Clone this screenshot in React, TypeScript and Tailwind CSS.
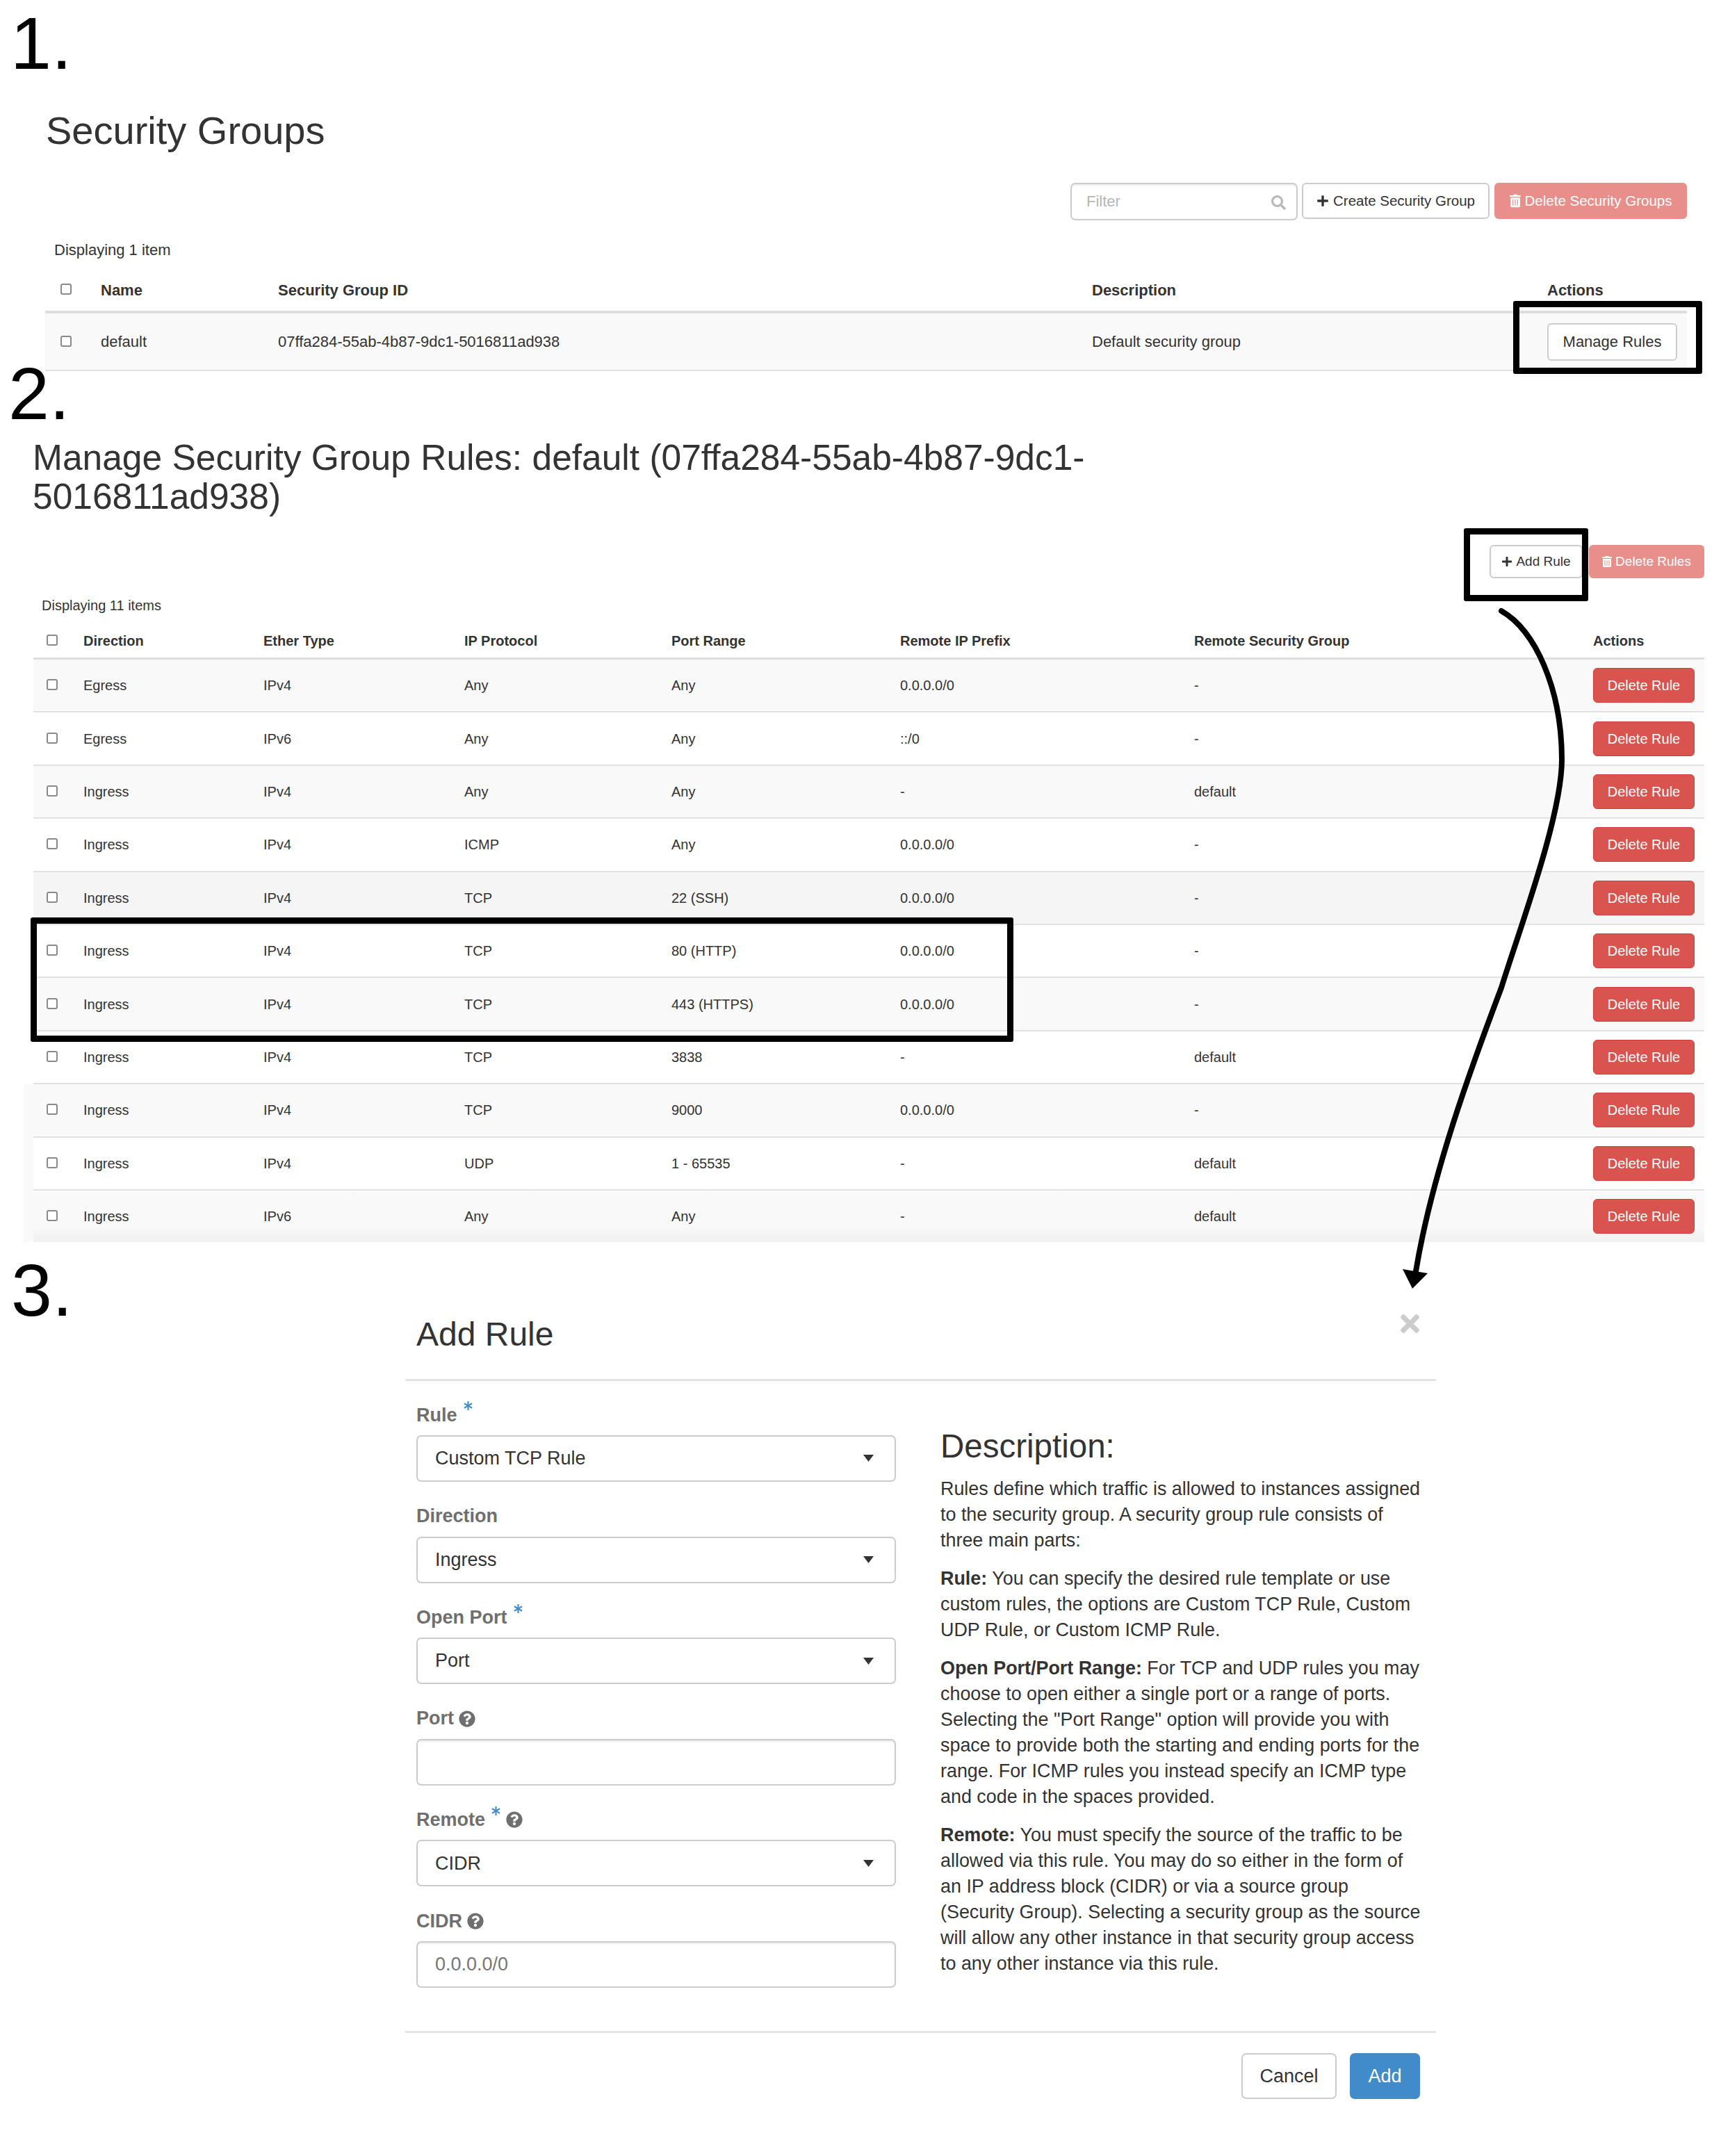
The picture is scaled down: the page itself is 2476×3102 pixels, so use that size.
import { FaPlus, FaTrashAlt, FaSearch, FaTimes, FaAsterisk, FaQuestionCircle } from 'react-icons/fa'

const rules = [
  ['Egress', 'IPv4', 'Any', 'Any', '0.0.0.0/0', '-'],
  ['Egress', 'IPv6', 'Any', 'Any', '::/0', '-'],
  ['Ingress', 'IPv4', 'Any', 'Any', '-', 'default'],
  ['Ingress', 'IPv4', 'ICMP', 'Any', '0.0.0.0/0', '-'],
  ['Ingress', 'IPv4', 'TCP', '22 (SSH)', '0.0.0.0/0', '-'],
  ['Ingress', 'IPv4', 'TCP', '80 (HTTP)', '0.0.0.0/0', '-'],
  ['Ingress', 'IPv4', 'TCP', '443 (HTTPS)', '0.0.0.0/0', '-'],
  ['Ingress', 'IPv4', 'TCP', '3838', '-', 'default'],
  ['Ingress', 'IPv4', 'TCP', '9000', '0.0.0.0/0', '-'],
  ['Ingress', 'IPv4', 'UDP', '1 - 65535', '-', 'default'],
  ['Ingress', 'IPv6', 'Any', 'Any', '-', 'default'],
]

const description = [
  {
    lead: '',
    lines: [
      'Rules define which traffic is allowed to instances assigned',
      'to the security group. A security group rule consists of',
      'three main parts:',
    ],
  },
  {
    lead: 'Rule:',
    lines: [
      ' You can specify the desired rule template or use',
      'custom rules, the options are Custom TCP Rule, Custom',
      'UDP Rule, or Custom ICMP Rule.',
    ],
  },
  {
    lead: 'Open Port/Port Range:',
    lines: [
      ' For TCP and UDP rules you may',
      'choose to open either a single port or a range of ports.',
      'Selecting the "Port Range" option will provide you with',
      'space to provide both the starting and ending ports for the',
      'range. For ICMP rules you instead specify an ICMP type',
      'and code in the spaces provided.',
    ],
  },
  {
    lead: 'Remote:',
    lines: [
      ' You must specify the source of the traffic to be',
      'allowed via this rule. You may do so either in the form of',
      'an IP address block (CIDR) or via a source group',
      '(Security Group). Selecting a security group as the source',
      'will allow any other instance in that security group access',
      'to any other instance via this rule.',
    ],
  },
]

function Checkbox() {
  return <input type="checkbox" className="h-4 w-4 appearance-none rounded-[3px] border-2 border-[#8a8a8a] bg-white" />
}

function Caret() {
  return (
    <svg width="15" height="10" viewBox="0 0 15 10" className="absolute right-[30px] top-1/2 -translate-y-1/2">
      <path d="M0 0h15L7.500 10z" fill="#333" />
    </svg>
  )
}

function Field({ label, required, help, children }: { label: string; required?: boolean; help?: boolean; children: React.ReactNode }) {
  return (
    <div className="mb-[30.6px]">
      <div className="mb-[12px] flex h-[36px] items-center pt-[2px] text-[27px] font-bold text-[#6f6f6f]">
        <span>{label}</span>
        {required && <FaAsterisk className="mb-[26px] ml-[9px] h-[13px] w-[13px] text-[#428bca]" />}
        {help && <FaQuestionCircle className={`h-[24px] w-[24px] ${required ? 'ml-[8px]' : 'ml-[7px]'}`} />}
      </div>
      {children}
    </div>
  )
}

function Select({ value }: { value: string }) {
  return (
    <div className="relative flex h-[67px] items-center rounded-[7px] border-2 border-[#ccc] bg-white pl-[25px] text-[27px] text-[#333]">
      {value}
      <Caret />
    </div>
  )
}

function TextBox({ placeholder }: { placeholder?: string }) {
  return (
    <input
      placeholder={placeholder}
      className="block h-[67px] w-full rounded-[7px] border-2 border-[#ccc] bg-white pl-[25px] text-[27px] text-[#333] shadow-[inset_0_2px_2px_rgba(0,0,0,0.08)] outline-none placeholder:text-[#777]"
    />
  )
}

export default function App() {
  return (
    <div className="relative h-[3102px] w-[2476px] overflow-hidden bg-white font-['Liberation_Sans',Arial,sans-serif] text-[#333]">
      {/* 1. security groups */}
      <section>
        <h1 className="pl-[66px] pt-[155px] text-[56px] leading-[66px]">Security Groups</h1>
        <div className="mt-[42px] flex items-start justify-end pr-[49px] text-[20.500px]">
          <div className="relative h-[54px] w-[327px]">
            <input
              placeholder="Filter"
              className="h-full w-full rounded-[7px] border-2 border-[#ccc] bg-white pl-[21px] text-[22px] shadow-[inset_0_2px_2px_rgba(0,0,0,0.08)] outline-none placeholder:text-[#b5b5b5]"
            />
            <FaSearch className="absolute right-[17px] top-[18px] h-[21px] w-[21px] text-[#bbb]" />
          </div>
          <button className="ml-[6px] flex h-[52px] w-[270px] items-center justify-center gap-[6px] rounded-[6px] border-2 border-[#ccc] bg-white">
            <FaPlus className="h-[18px] w-[18px]" />
            Create Security Group
          </button>
          <button className="ml-[7px] flex h-[52px] w-[277px] items-center justify-center gap-[6px] rounded-[6px] bg-[#e88f8b] text-white">
            <FaTrashAlt className="h-[20px] w-[16px]" />
            Delete Security Groups
          </button>
        </div>
        <div className="mt-[28px] h-[30px] pl-[78px] text-[22px] leading-[30px]">Displaying 1 item</div>
        <div className="mt-[12px] text-[22px]">
          <div className="ml-[65px] grid h-[64px] w-[2362px] grid-cols-[80px_255px_1171px_655px_201px] items-center border-b-4 border-[#ddd] font-bold">
            <span className="pl-[22px] leading-none"><Checkbox /></span>
            <span>Name</span>
            <span>Security Group ID</span>
            <span>Description</span>
            <span>Actions</span>
          </div>
          <div className="ml-[65px] grid h-[83px] w-[2362px] grid-cols-[80px_255px_1171px_655px_201px] items-center border-b-2 border-[#e2e2e2] bg-[#f9f9f9]">
            <span className="pl-[22px] leading-none"><Checkbox /></span>
            <span>default</span>
            <span>07ffa284-55ab-4b87-9dc1-5016811ad938</span>
            <span>Default security group</span>
            <button className="h-[54px] w-[187px] rounded-[6px] border-2 border-[#ccc] bg-white">Manage Rules</button>
          </div>
        </div>
      </section>

      {/* 2. rules */}
      <section className="text-[20px]">
        <h1 className="mt-[96px] pl-[47px] text-[51.500px] leading-[56px]">
          Manage Security Group Rules: default (07ffa284-55ab-4b87-9dc1-
          <br />
          5016811ad938)
        </h1>
        <div className="mt-[42px] flex justify-end pr-[24px] text-[19px]">
          <button className="flex h-[48px] w-[134px] items-center justify-center gap-[5px] rounded-[6px] border-2 border-[#ccc] bg-white">
            <FaPlus className="h-[16px] w-[16px]" />
            Add Rule
          </button>
          <button className="ml-[9px] flex h-[48px] w-[166px] items-center justify-center gap-[5px] rounded-[6px] bg-[#e88f8b] text-white">
            <FaTrashAlt className="h-[18px] w-[14px]" />
            Delete Rules
          </button>
        </div>
        <div className="mt-[25px] h-[28px] pl-[60px] leading-[28px]">Displaying 11 items</div>
        <div className="ml-[48px] mt-[10px] grid h-[54px] w-[2404px] grid-cols-[72px_259px_289px_298px_329px_423px_574px_160px] items-center border-b-[3px] border-[#ddd] pt-[3px] font-bold">
          <span className="pl-[19px] leading-none"><Checkbox /></span>
          <span>Direction</span>
          <span>Ether Type</span>
          <span>IP Protocol</span>
          <span>Port Range</span>
          <span>Remote IP Prefix</span>
          <span>Remote Security Group</span>
          <span>Actions</span>
        </div>
        <div className="ml-[48px] w-[2404px]">
          {rules.map((r, i) => (
            <div
              key={i}
              className={`grid grid-cols-[72px_259px_289px_298px_329px_423px_574px_160px] items-center ${
                i === 10 ? 'h-[74px] bg-gradient-to-b from-[#f9f9f9] from-70% to-[#f0f0f0]' : 'h-[76.4px] border-b-2 border-[#e2e2e2]'
              } ${i === 4 ? 'bg-[#f5f5f5]' : i % 2 === 0 && i !== 10 ? 'bg-[#f9f9f9]' : ''}`}
            >
              <span className="pl-[19px] leading-none"><Checkbox /></span>
              {r.map((c, j) => (
                <span key={j}>{c}</span>
              ))}
              <button className="h-[50px] w-[146px] rounded-[6px] border border-[#d43f3a] bg-[#d9534f] text-white">Delete Rule</button>
            </div>
          ))}
        </div>
      </section>

      {/* 3. add rule dialog */}
      <section className="ml-[583px] w-[1483px]">
        <div className="mt-[103px] h-[97px] border-b-[3px] border-[#e5e5e5] pl-[16px] text-[48px] leading-[60px]">Add Rule</div>
        <div className="flex h-[935px] pl-[16px] pt-[30px]">
          <div className="w-[690px]">
            <Field label="Rule" required><Select value="Custom TCP Rule" /></Field>
            <Field label="Direction"><Select value="Ingress" /></Field>
            <Field label="Open Port" required><Select value="Port" /></Field>
            <Field label="Port" help><TextBox /></Field>
            <Field label="Remote" required help><Select value="CIDR" /></Field>
            <Field label="CIDR" help><TextBox placeholder="0.0.0.0/0" /></Field>
          </div>
          <div className="ml-[64px] pt-[36px]">
            <h2 className="text-[47.500px] leading-[56px]">Description:</h2>
            <div className="mt-[15px] text-[26.900px] leading-[37px]">
              {description.map((p, i) => (
                <p key={i} className="mb-[18px] whitespace-pre">
                  {p.lines.map((line, j) => (
                    <span key={j} className="block">
                      {j === 0 && p.lead && <b>{p.lead}</b>}
                      {line}
                    </span>
                  ))}
                </p>
              ))}
            </div>
          </div>
        </div>
        <div className="flex justify-end gap-[19px] border-t-[3px] border-[#e5e5e5] pr-[23px] pt-[29px] text-[27px]">
          <button className="h-[66px] w-[137px] rounded-[7px] border-2 border-[#ccc] bg-white">Cancel</button>
          <button className="h-[66px] w-[101px] rounded-[7px] bg-[#428bca] text-white">Add</button>
        </div>
      </section>

      {/* annotations on top of the screenshots */}
      <div className="absolute left-[15px] top-[9px] text-[106px] leading-none text-black">1.</div>
      <div className="absolute left-[12px] top-[513px] text-[106px] leading-none text-black">2.</div>
      <div className="absolute left-[16px] top-[1803px] text-[106px] leading-none text-black">3.</div>

      <div className="absolute left-[2177px] top-[433px] h-[105px] w-[272px] rounded-[3px] border-[9px] border-black" />
      <div className="absolute left-[2106px] top-[760px] h-[105px] w-[179px] rounded-[3px] border-[9px] border-black" />
      <div className="absolute left-[44px] top-[1320px] h-[179px] w-[1414px] rounded-[3px] border-[9px] border-black" />

      <div className="absolute left-[34px] top-[1560px] h-[227px] w-[14px] bg-[#f9f9f9]" />

      <FaTimes className="absolute left-[2015px] top-[1885px] h-[39px] w-[27px] text-[#ccc]" />

      <svg className="pointer-events-none absolute left-0 top-0" width="2476" height="3102" viewBox="0 0 2476 3102">
        <path
          d="M2160 879C2208 906 2247 990 2247 1093C2247 1175 2185 1340 2160 1421C2115 1540 2060 1690 2037 1829"
          fill="none"
          stroke="#000"
          strokeWidth="8"
          strokeLinecap="round"
        />
        <path d="M2018 1826L2036 1829L2054 1832L2032 1854z" fill="#000" />
      </svg>
    </div>
  )
}
